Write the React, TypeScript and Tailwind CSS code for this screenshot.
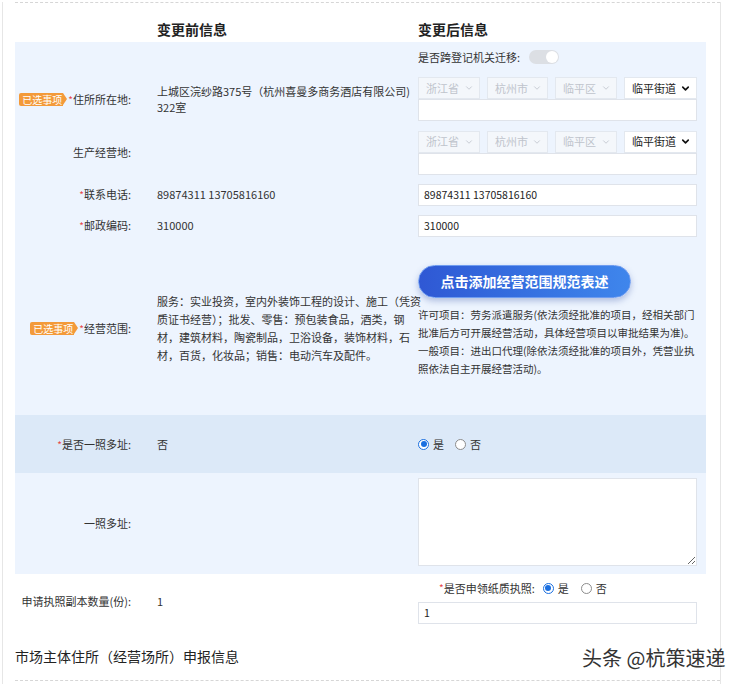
import { ChevronDown } from "lucide-react";

const font = "font-['Noto_Sans_CJK_SC','Liberation_Sans',sans-serif]";

const Badge = () => (
  <span className="flex items-center mr-[1px]">
    <span className="h-[13px] bg-[#f39a3a] text-white text-[10px] leading-[13px] pl-[3px] pr-[1px] rounded-l-[2px]">已选事项</span>
    <span className="w-0 h-0 border-y-[6.5px] border-y-transparent border-l-[4px] border-l-[#f39a3a]" />
  </span>
);

const Star = () => <span className="text-[#e8474a] text-[10px] self-start mt-[1px]">*</span>;

const Label = ({ text, star, badge }: { text: string; star?: boolean; badge?: boolean }) => (
  <div className="w-[118px] flex items-center justify-end text-[11px] text-[#333] whitespace-nowrap pr-[2px]">
    {badge && <Badge />}
    {star && <Star />}
    <span>{text}:</span>
  </div>
);

const Sel = ({ text, className, active }: { text: string; className: string; active?: boolean }) => (
  <div
    className={`flex h-[22px] items-center justify-between border border-[#e3e8ef] pl-[7px] pr-[5px] text-[11px] ${
      active ? "bg-white text-[#222]" : "bg-[#f4f7fb] text-[#bfc4cc]"
    } ${className}`}
  >
    <span>{text}</span>
    {active ? (
      <ChevronDown size={11} strokeWidth={3.5} className="text-[#111]" />
    ) : (
      <ChevronDown size={10} strokeWidth={2} className="text-[#bfc4cc]" />
    )}
  </div>
);

const Field = ({ value }: { value?: string }) => (
  <div className="h-[22px] w-[279px] border border-[#dfe3ea] bg-white px-[5px] text-[10.5px] leading-[20px] text-[#222]">
    {value}
  </div>
);

const Radio = ({ on, text }: { on?: boolean; text: string }) => (
  <span className="flex items-center gap-[4px] text-[11px] text-[#333]">
    {on ? (
      <span className="w-[11px] h-[11px] rounded-full border border-[#1a6fe0] bg-white flex items-center justify-center">
        <span className="w-[6px] h-[6px] rounded-full bg-[#1a6fe0]" />
      </span>
    ) : (
      <span className="w-[11px] h-[11px] rounded-full border border-[#8c8c8c] bg-white" />
    )}
    {text}
  </span>
);

const AddressSelects = () => (
  <div className="flex flex-col">
    <div className="flex gap-[7px]">
      <Sel text="浙江省" className="w-[62px]" />
      <Sel text="杭州市" className="w-[61px]" />
      <Sel text="临平区" className="w-[62px]" />
      <Sel text="临平街道" className="w-[73px]" active />
    </div>
    <Field />
  </div>
);

export default function App() {
  return (
    <div className={`${font} relative w-[733px] h-[684px] bg-white overflow-hidden pt-[2px]`}>
      <div className="ml-[2px] w-[719px] h-[682px] border-l border-r border-[#e6e6e6] flex flex-col">
        <div className="ml-[12px] border-t border-dashed border-[#d6d6d6]" />
        {/* header */}
        <div className="h-[39px] flex items-end pb-[3px] text-[14px] leading-[20px] font-bold text-[#222]">
          <span className="ml-[154px]">变更前信息</span>
          <span className="ml-[191px]">变更后信息</span>
        </div>

        <div className="ml-[12px] w-[691px] bg-[#edf4fe] flex flex-col">
          {/* toggle */}
          <div className="h-[30px] flex items-center pl-[403px] text-[11px] text-[#333]">
            <span>是否跨登记机关迁移:</span>
            <span className="ml-[9px] w-[30px] h-[14px] rounded-full bg-[#dcdfe4] flex items-center justify-end pr-[1px]">
              <span className="w-[12px] h-[12px] rounded-full bg-white" />
            </span>
          </div>

          {/* address */}
          <div className="h-[54px] flex items-center">
            <Label text="住所所在地" star badge />
            <div className="ml-[24px] w-[253px] text-[11px] leading-[16px] text-[#333] whitespace-nowrap">
              上城区浣纱路375号（杭州喜曼多商务酒店有限公司)
              <br />
              322室
            </div>
            <div className="ml-[8px]">
              <AddressSelects />
            </div>
          </div>

          {/* production */}
          <div className="h-[53px] flex items-center">
            <Label text="生产经营地" />
            <div className="ml-[24px] w-[253px]" />
            <div className="ml-[8px]">
              <AddressSelects />
            </div>
          </div>

          {/* phone */}
          <div className="h-[31px] flex items-center">
            <Label text="联系电话" star />
            <div className="ml-[24px] w-[253px] text-[11px] text-[#333]">89874311 13705816160</div>
            <div className="ml-[8px]">
              <Field value="89874311 13705816160" />
            </div>
          </div>

          {/* postal */}
          <div className="h-[31px] flex items-center">
            <Label text="邮政编码" star />
            <div className="ml-[24px] w-[253px] text-[11px] text-[#333]">310000</div>
            <div className="ml-[8px]">
              <Field value="310000" />
            </div>
          </div>

          {/* scope */}
          <div className="h-[174px] flex items-center">
            <Label text="经营范围" star badge />
            <div className="ml-[24px] w-[253px] text-[11px] leading-[18px] text-[#333] whitespace-nowrap">
              服务：实业投资，室内外装饰工程的设计、施工（凭资
              <br />
              质证书经营）；批发、零售：预包装食品，酒类，钢
              <br />
              材，建筑材料，陶瓷制品，卫浴设备，装饰材料，石
              <br />
              材，百货，化妆品；销售：电动汽车及配件。
            </div>
            <div className="ml-[8px] w-[279px] flex flex-col mt-[-13px]">
              <div className="w-[213px] h-[33px] rounded-full bg-gradient-to-r from-[#2f58d4] to-[#3f86ec] border border-[#6f9cf0] shadow-[0_3px_6px_rgba(60,90,170,0.35)] flex items-center justify-center text-white text-[14px] font-bold">
                点击添加经营范围规范表述
              </div>
              <div className="mt-[8px] text-[10.5px] leading-[18px] text-[#333] whitespace-nowrap">
                许可项目：劳务派遣服务(依法须经批准的项目，经相关部门
                <br />
                批准后方可开展经营活动，具体经营项目以审批结果为准)。
                <br />
                一般项目：进出口代理(除依法须经批准的项目外，凭营业执
                <br />
                照依法自主开展经营活动)。
              </div>
            </div>
          </div>
        </div>

        {/* multi address */}
        <div className="ml-[12px] w-[691px] h-[58px] bg-[#dce9f8] flex items-center">
          <Label text="是否一照多址" star />
          <div className="ml-[24px] w-[253px] text-[11px] text-[#333]">否</div>
          <div className="ml-[8px] flex items-center gap-[11px]">
            <Radio on text="是" />
            <Radio text="否" />
          </div>
        </div>

        <div className="ml-[12px] w-[691px] h-[101px] bg-[#edf4fe] flex items-center">
          <Label text="一照多址" />
          <div className="ml-[24px] w-[253px]" />
          <textarea
            readOnly
            className="ml-[8px] mt-[-4px] w-[279px] h-[88px] border border-[#dfe3ea] bg-white outline-none"
          />
        </div>

        {/* copies */}
        <div className="ml-[12px] w-[691px] h-[54px] flex items-center">
          <Label text="申请执照副本数量(份)" />
          <div className="ml-[24px] w-[253px] text-[11px] text-[#333]">1</div>
          <div className="ml-[8px] flex flex-col gap-[5px] mt-[1px]">
            <div className="h-[18px] flex items-center pl-[21px] text-[11px] text-[#333]">
              <Star />
              <span>是否申领纸质执照:</span>
              <span className="ml-[8px] flex items-center gap-[12px]">
                <Radio on text="是" />
                <Radio text="否" />
              </span>
            </div>
            <Field value="1" />
          </div>
        </div>

        {/* footer */}
        <div className="ml-[12px] pt-[18px] h-[52px] text-[14px] leading-[20px] text-[#222]">
          市场主体住所（经营场所）申报信息
        </div>
        <div className="ml-[12px] border-t border-dashed border-[#d6d6d6]" />
      </div>

      <div className="absolute left-[582px] top-[645px] text-[20px] leading-[26px] text-[#333] whitespace-nowrap [text-shadow:0_0_2px_#fff]">
        头条 @杭策速递
      </div>
    </div>
  );
}
